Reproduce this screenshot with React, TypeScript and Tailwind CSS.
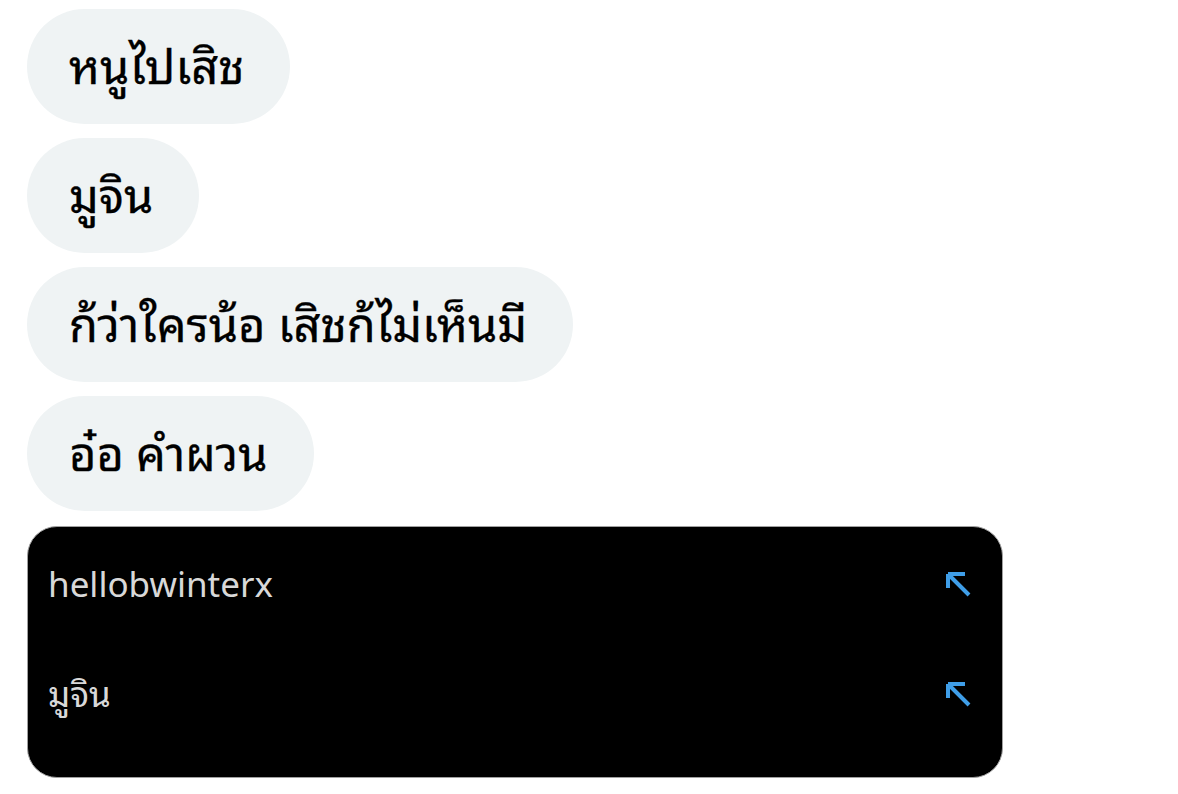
import React from 'react'

const messages = ['หนูไปเสิช', 'มูจิน', 'ก้ว่าใครน้อ เสิชก้ไม่เห็นมี', 'อ๋อ คำผวน']

const suggestions = ['hellobwinterx', 'มูจิน']

// arrow pointing up-left, used to fill the search box with a suggestion
const FillArrow = () => (
    <svg width='30' height='30' viewBox='0 0 30 30' fill='none'>
        <path d='M5 5 L26 26 M5 5 L5 19 M5 5 L22 5' stroke='#3f9ee8' strokeWidth='4' strokeLinecap='butt' strokeLinejoin='miter' />
    </svg>
)

export default function App() {
    return (
        <div className='w-[1178px] h-[794px] bg-white overflow-hidden pt-[9px] pl-[27px]' style={{ fontFamily: '"Noto Sans", "Noto Sans Thai Looped", "Liberation Sans", sans-serif' }}>
            {/* chat bubbles */}
            <div className='flex flex-col items-start gap-[14px]'>
                {messages.map((text, index) => (
                    <div key={index} className='h-[115px] pl-[42px] pr-[46px] flex items-center rounded-full bg-[#eff3f4] text-[47px] text-black [-webkit-text-stroke:0.3px_black]'>
                        {text}
                    </div>
                ))}
            </div>

            {/* suggestions */}
            <div className='mt-[15px] w-[976px] h-[252px] bg-black rounded-[30px] border border-[#a0a0a0] flex flex-col pt-[2px]'>
                {suggestions.map((text, index) => (
                    <div key={index} className='h-[110px] flex items-center justify-between pl-[20px] pr-[29px]'>
                        <span className='text-[35px] text-[#d8d8d8]'>{text}</span>
                        <FillArrow />
                    </div>
                ))}
            </div>
        </div>
    )
}
